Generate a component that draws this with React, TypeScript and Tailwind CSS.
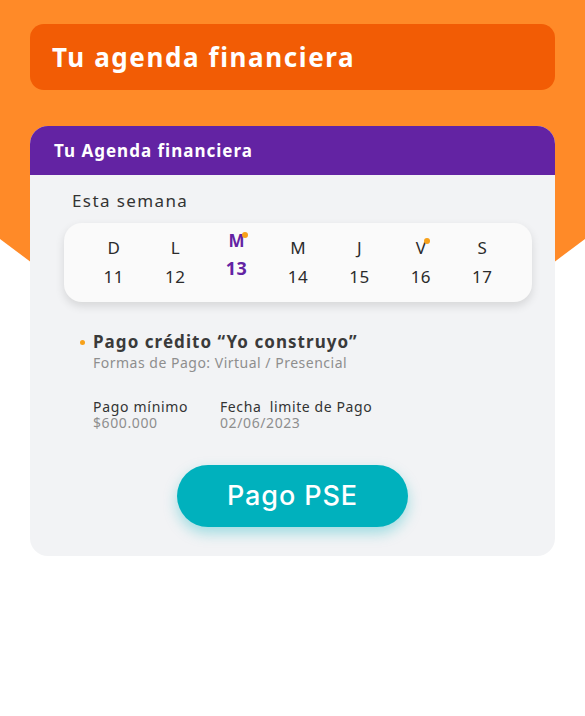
import React from "react";

const days = [
  { l: "D", n: "11" },
  { l: "L", n: "12" },
  { l: "M", n: "13", active: true, dot: true },
  { l: "M", n: "14" },
  { l: "J", n: "15" },
  { l: "V", n: "16", dot: true },
  { l: "S", n: "17" },
];

export default function App() {
  return (
    <div
      className="relative w-[585px] h-[716px] bg-white overflow-hidden"
      style={{ fontFamily: "'Noto Sans', Inter, sans-serif" }}
    >
      <div
        className="absolute inset-x-0 top-0 h-[460px] bg-[#ff8a28]"
        style={{ clipPath: "polygon(0 0, 100% 0, 100% 239px, 50% 458px, 0 239px)" }}
      />
      <div className="relative px-[30px] pt-[24px]">
        <div className="h-[66px] rounded-[14px] bg-[#f25c05] flex items-center pl-[22px]">
          <span className="text-white font-bold text-[26px] tracking-[1.6px]">Tu agenda financiera</span>
        </div>

        <div className="mt-[36px] rounded-[18px] overflow-hidden bg-[#f2f3f5]">
          <div className="h-[49px] bg-[#6323a3] flex items-center pl-[24px]">
            <span className="text-white font-bold text-[17px] tracking-[1px]">Tu Agenda financiera</span>
          </div>
          <div className="pt-[14px] pb-[29px]">
            <div className="pl-[42px] text-[17px] text-[#333] leading-[24px] tracking-[1.4px]">Esta semana</div>
            <div className="ml-[34px] mr-[23px] mt-[10px] h-[79px] rounded-[18px] bg-[#fafafa] shadow-[0_4px_10px_rgba(0,0,0,0.12)] grid grid-cols-7 px-[19px]">
              {days.map((d, i) => (
                <div key={i} className="flex flex-col items-center justify-center">
                  {d.active ? (
                    <div className="flex flex-col items-center -mt-[16px]">
                      <span className="relative text-[#6323a3] font-bold text-[17px] leading-[22px]">
                        {d.l}
                        <span className="absolute -right-[3px] top-[2px] w-[6px] h-[6px] rounded-full bg-[#f7a11a]" />
                      </span>
                      <span className="text-[#6323a3] font-bold text-[18px] leading-[24px] mt-[4px] tracking-[0.5px]">{d.n}</span>
                    </div>
                  ) : (
                    <div className="flex flex-col items-center">
                      <span className="relative text-[#2b2b2b] text-[17px] leading-[22px]">
                        {d.l}
                        {d.dot && (
                          <span className="absolute -right-[4px] top-[1px] w-[6px] h-[6px] rounded-full bg-[#f7a11a]" />
                        )}
                      </span>
                      <span className="text-[#2b2b2b] text-[17px] leading-[22px] mt-[7px] tracking-[0.5px]">{d.n}</span>
                    </div>
                  )}
                </div>
              ))}
            </div>

            <div className="mt-[28px] pl-[50px] flex items-start">
              <span className="mt-[10px] w-[5px] h-[5px] rounded-full bg-[#f7a11a] mr-[8px]" />
              <div>
                <div className="text-[17px] font-bold text-[#3a3a3a] leading-[24px] tracking-[1.05px]">Pago crédito “Yo construyo”</div>
                <div className="text-[14px] text-[#8e8e8e] leading-[18px] tracking-[0.5px]">Formas de Pago: Virtual / Presencial</div>
              </div>
            </div>

            <div className="mt-[27px] pl-[63px] flex">
              <div className="w-[127px]">
                <div className="text-[14px] text-[#333] leading-[16px] tracking-[0.7px]">Pago mínimo</div>
                <div className="text-[14px] text-[#8e8e8e] leading-[16px] tracking-[0.6px]">$600.000</div>
              </div>
              <div>
                <div className="text-[14px] text-[#333] leading-[16px] whitespace-pre tracking-[0.6px]">Fecha  limite de Pago</div>
                <div className="text-[14px] text-[#8e8e8e] leading-[16px] tracking-[0.6px]">02/06/2023</div>
              </div>
            </div>

            <div className="mt-[34px] flex justify-center">
              <button
                className="w-[231px] h-[62px] rounded-full bg-[#00b1bd] text-white text-[27px] font-medium tracking-[0.9px] shadow-[0_6px_14px_rgba(0,177,189,0.35)]"
                style={{ fontFamily: "Inter, 'Noto Sans', sans-serif" }}
              >
                Pago PSE
              </button>
            </div>
          </div>
        </div>
      </div>
    </div>
  );
}
